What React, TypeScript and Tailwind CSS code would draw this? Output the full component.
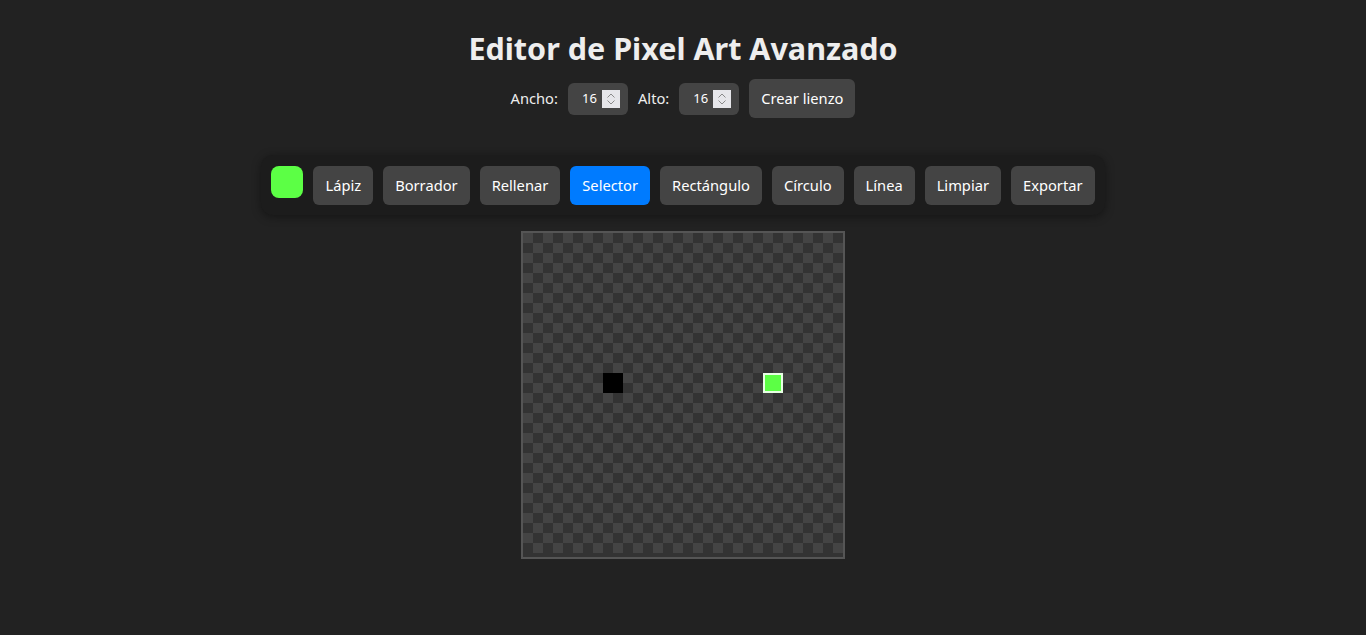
import React from 'react';

const SIZE = 16;

const TOOLS = ['Lápiz', 'Borrador', 'Rellenar', 'Selector', 'Rectángulo', 'Círculo', 'Línea', 'Limpiar', 'Exportar'];

const PIXELS: Record<string, string> = {
  '4-7': '#000000',
  '12-7': '#5cff45',
};

// number field with the spin box drawn in, the way Chrome shows it
const SizeInput: React.FC<{ value: number }> = ({ value }) => (
  <div className="w-[60px] h-8 rounded-md bg-[#444] flex items-center pl-[14px] pr-2 gap-[5px]">
    <span className="text-white text-[13px] leading-none">{value}</span>
    <span className="w-[18px] h-[18px] bg-[#e6e6ea] flex flex-col items-center justify-center gap-[2px]">
      <svg width="8" height="5" viewBox="0 0 8 5" fill="none" stroke="#8a8a8a" strokeWidth="1">
        <path d="M0.5 4.5 L4 1 L7.5 4.5" />
      </svg>
      <svg width="8" height="5" viewBox="0 0 8 5" fill="none" stroke="#8a8a8a" strokeWidth="1">
        <path d="M0.5 0.5 L4 4 L7.5 0.5" />
      </svg>
    </span>
  </div>
);

const PixelGrid: React.FC = () => {
  const cells = [];
  for (let y = 0; y < SIZE; y++) {
    for (let x = 0; x < SIZE; x++) {
      const color = PIXELS[`${x}-${y}`];
      const selected = x === 12 && y === 7;
      cells.push(
        <div
          key={`${x}-${y}`}
          className={selected ? 'border-2 border-[#e8ffe4]' : ''}
          style={color ? { backgroundColor: color } : undefined}
        />
      );
    }
  }
  return (
    <div className="border-2 border-[#555] bg-[#333] pb-[4px]">
      <div className="grid grid-cols-[repeat(16,20px)] grid-rows-[repeat(16,20px)] bg-[conic-gradient(#333_25%,#444_0_50%,#333_0_75%,#444_0)] bg-[length:20px_20px]">
        {cells}
      </div>
    </div>
  );
};

export default function App() {
  return (
    <div className="min-h-screen bg-[#222] text-[#eee] font-['Noto_Sans','Open_Sans',sans-serif] flex flex-col items-center">
      <h1 className="mt-[27px] text-[30.5px] font-bold leading-[42px]">Editor de Pixel Art Avanzado</h1>

      <div className="mt-[10px] flex items-center gap-[10px] text-[14.7px]">
        <label className="flex items-center gap-[10px]">
          Ancho: <SizeInput value={SIZE} />
        </label>
        <label className="flex items-center gap-[10px]">
          Alto: <SizeInput value={SIZE} />
        </label>
        <button className="h-[39px] px-3 rounded-md bg-[#444] text-white text-[14.7px]">Crear lienzo</button>
      </div>

      <div className="mt-[37px] flex items-start gap-[10px] p-[11px_10px_10px] rounded-xl bg-[#1c1c1c] shadow-[0_2px_10px_rgba(0,0,0,0.4)]">
        <div className="w-8 h-8 rounded-lg bg-[#5cff45]" />
        {TOOLS.map((tool) => (
          <button
            key={tool}
            className={`h-[39px] px-3 rounded-md text-[14.7px] text-white ${tool === 'Selector' ? 'bg-[#007bff]' : 'bg-[#444]'}`}
          >
            {tool}
          </button>
        ))}
      </div>

      <div className="mt-4">
        <PixelGrid />
      </div>
    </div>
  );
}
